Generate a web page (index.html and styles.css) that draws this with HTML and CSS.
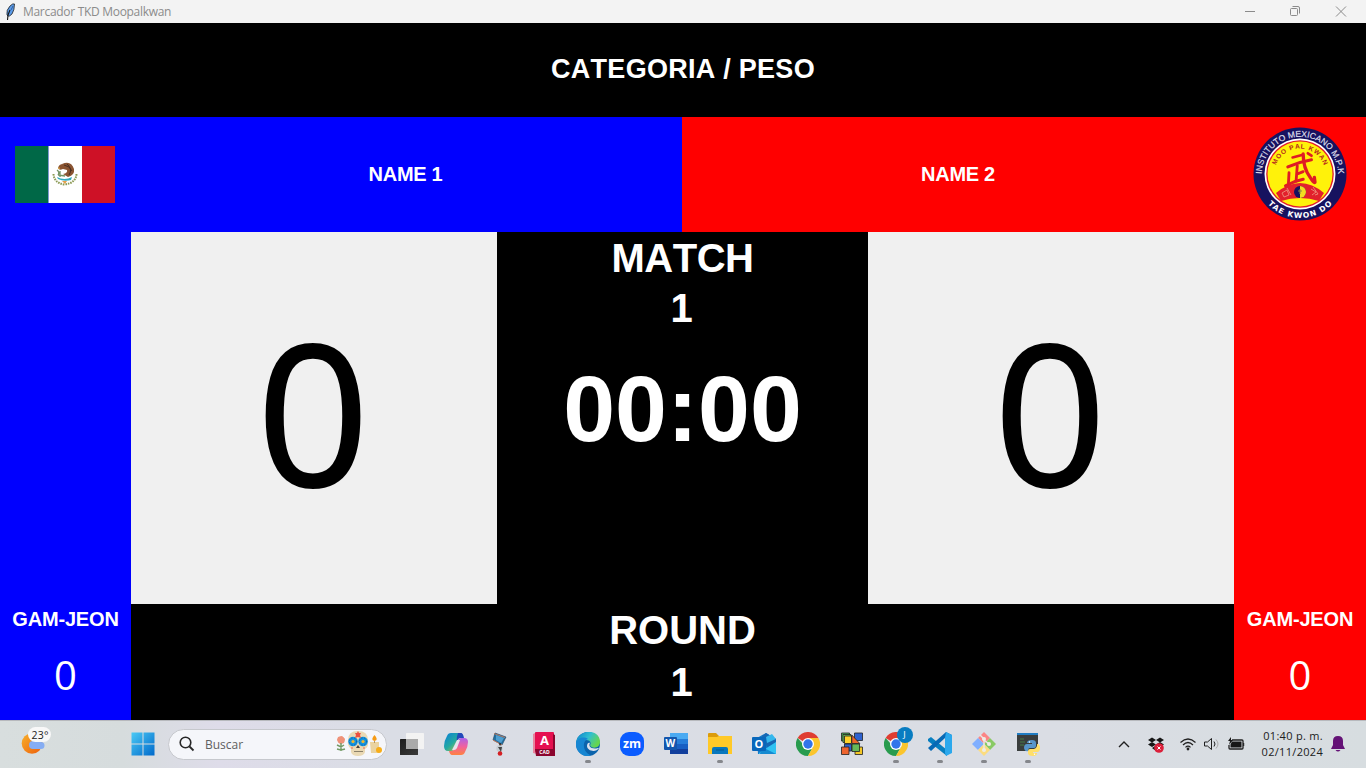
FILE: index.html
```html
<!DOCTYPE html>
<html lang="es">
<head>
<meta charset="utf-8">
<title>Marcador TKD Moopalkwan</title>
<link rel="stylesheet" href="styles.css">
</head>
<body>
<div class="screen">
  <header class="titlebar">
    <svg class="feather" viewBox="0 0 12 18"><path d="M3 12Q2 7 6 3Q9 0 10.500 1Q10.500 7 8 11Q5 14 4 13Z" fill="#5b9be8" stroke="#222" stroke-width=".8"/><path d="M6 7L4 12L3.500 17" fill="none" stroke="#151515" stroke-width="1.1"/><path d="M9 3L7 7" stroke="#244e8c" stroke-width=".8"/></svg>
    <span class="window-title">Marcador TKD Moopalkwan</span>
    <svg class="window-controls" viewBox="0 0 106 22" fill="none" stroke="#8b8b8b"><path d="M5 10.500H15"/><rect x="50.500" y="7.500" width="7" height="7" rx="1"/><path d="M52.500 5.500H58a1.500 1.500 0 0 1 1.500 1.500V12.500"/><path d="M96 5.500L106 15.500M106 5.500L96 15.500"/></svg>
  </header>
  <div class="category">CATEGORIA / PESO</div>
  <div class="names">
    <div class="fighter blue">
      <svg class="flag" viewBox="0 0 100 57"><path fill="#006847" d="M0 0h33.500v57H0z"/><path fill="#fff" d="M33.500 0h33.500v57H33.500z"/><path fill="#ce1126" d="M67 0h33v57H67z"/>
        <path d="M38.500 28Q39 37 49.500 38.500Q61 37 61.500 28" fill="none" stroke="#8c9a55" stroke-width="2" stroke-dasharray="1.600 .9"/><path d="M42 31Q49.500 35 57 31L56 34Q49 36 43 33Z" fill="#2fa9bd"/><path d="M47 35h5l-2 3z" fill="#e5a04b"/><path d="M47 18Q56 14 59 23Q60 29 53 31L48 28Q53 27 52 24L48 23Q44 25 43 22Q44 18 48 18Z" fill="#8a5432"/><path d="M52 18Q58 23 54 29M49 19Q55 20 57 25" fill="none" stroke="#4b2f22"/><path d="M42 24Q45 26 43 29M45 25v6M43 29l7 1" stroke="#749365" fill="none" stroke-width="1.300"/><path d="M44 21l-1 2 2-.5z" fill="#e9b43e"/></svg>
      <span class="fighter-name">NAME 1</span>
    </div>
    <div class="fighter red">
      <span class="fighter-name">NAME 2</span>
      <svg class="school" viewBox="0 0 94 94">
        <defs><path id="outer" d="M8.800 48A38.200 38.200 0 0 1 85.200 48"/><path id="inner" d="M21.500 47A25.500 25.500 0 0 1 72.500 47"/><path id="lower" d="M3 47A44 44 0 0 0 91 47"/></defs>
        <circle cx="47" cy="47" r="46.500" fill="#17125f"/><circle cx="47" cy="47" r="35.500" fill="#fff"/><circle cx="47" cy="47" r="33.800" fill="#e21a2c"/><circle cx="47" cy="47" r="32.500" fill="#fff20a"/>
        <path d="M23 66Q47 46 71 66L66 74Q47 68 28 74Z" fill="#e2202c"/><circle cx="47" cy="65" r="6" fill="#17125f"/><path d="M47 59a6 6 0 0 1 0 12z" fill="#f2dc20"/><path d="M45 64h4M47 62v5" stroke="#8f8a45"/><path d="M29 66l5-3 2 5-5 2zM34 61l4 7M58 62l5 3-4 3M60 60l5 7-3 1" stroke="#ef9a83" fill="none" stroke-width=".8"/>
        <g fill="none" stroke="#df1c24" stroke-linecap="round" stroke-linejoin="round" transform="translate(-10 -8.500) scale(1.180)"><path d="M42 33L50 31" stroke-width="2.200"/><path d="M38 41Q47 37 58 35" stroke-width="2.600"/><path d="M51 30Q51 42 57 50Q60 55 61 54L60.500 50" stroke-width="2.800"/><path d="M46 40L45 53M39 46L38.500 55M46 47L51 45" stroke-width="2.400"/><path d="M36 57Q43 53 51 51.500" stroke-width="2.600"/><path d="M55 29.500L58 31.500" stroke-width="2.400"/></g>
        <g class="school-text"><text class="outer-text"><textPath href="#outer" textLength="118" startOffset="1">INSTITUTO MEXICANO M.P.K</textPath></text><text class="inner-text"><textPath href="#inner" startOffset="50%" text-anchor="middle" textLength="62">MOO PAL KWAN</textPath></text><text class="lower-text"><textPath href="#lower" startOffset="50%" text-anchor="middle" textLength="72">TAE KWON DO</textPath></text></g>
      </svg>
    </div>
  </div>
  <main class="board">
    <aside class="penalty blue"><span class="penalty-label">GAM-JEON</span><span class="penalty-value">0</span></aside>
    <section class="center">
      <div class="scores">
        <div class="score">0</div>
        <div class="match"><span class="big-label match-label">MATCH</span><span class="match-number">1</span><span class="timer">00:00</span></div>
        <div class="score">0</div>
      </div>
      <div class="round"><span class="big-label">ROUND</span><span class="round-number">1</span></div>
    </section>
    <aside class="penalty red"><span class="penalty-label">GAM-JEON</span><span class="penalty-value">0</span></aside>
  </main>
  <footer class="taskbar">
    <svg class="weather" viewBox="0 0 32 32"><defs><linearGradient id="sun" y2="1"><stop stop-color="#f6b12c"/><stop offset="1" stop-color="#ee5e0b"/></linearGradient></defs><circle cx="11" cy="16.500" r="10.300" fill="url(#sun)"/><path d="M12 22a4 4 0 0 1 0-8 5 5 0 0 1 8 1 3.500 3.500 0 0 1 0 7z" fill="#86adf3"/><rect x="7" y="0" width="23" height="15" rx="7.500" fill="#f8f8f8"/><text x="10.500" y="11.500" class="temperature" textLength="17">23°</text></svg>
    <svg class="start" viewBox="0 0 24 24"><defs><linearGradient id="win" x2="1" y2="1"><stop stop-color="#4bcaf5"/><stop offset="1" stop-color="#0069cb"/></linearGradient></defs><path fill="url(#win)" d="M.5.5h11v11H.5zm12 0h11v11h-11zM.5 12.500h11v11H.5zm12 0h11v11h-11z"/></svg>
    <div class="search"><svg class="lens" viewBox="0 0 16 16"><circle cx="6.500" cy="6.500" r="5.300" fill="none" stroke="#272727" stroke-width="1.600"/><path d="M10.500 10.500L14.500 14.500" stroke="#272727" stroke-width="1.800"/></svg><span>Buscar</span>
      <svg class="holiday" viewBox="0 0 46 26"><g fill="#ef9279"><circle cx="5" cy="9" r="3.500"/><path d="M1 9l1-3 4-1 3 3-1 4-4 1z"/></g><path d="M5 12v8M1 14l4 2 3-2M1 18l4 1 4-1" stroke="#739a66" fill="none" stroke-width="1.500"/><path d="M12 9Q12 0 22 0T32 9Q33 16 29 18V21Q28 25 22 25T15 21V18Q11 15 12 9" fill="#ead9b4"/><g fill="#1593df"><circle cx="17" cy="10.500" r="4.800"/><circle cx="27" cy="10.500" r="4.800"/></g><g fill="none" stroke="#075797" stroke-dasharray="1 2"><circle cx="17" cy="10.500" r="3.600"/><circle cx="27" cy="10.500" r="3.600"/></g><g fill="#efb72d"><circle cx="17" cy="10.500" r="1.600"/><circle cx="27" cy="10.500" r="1.600"/></g><path d="M22 0l1 2 2 0-1 2 1 3-3-1-3 1 1-3-1-2 2 0z" fill="#ed5140"/><path d="M22 14l2 3h-4z" fill="#4a4137"/><path d="M18 20.500h9" stroke="#8b816a"/><circle cx="16" cy="17" r=".8" fill="#e5594c"/><circle cx="28" cy="17" r=".8" fill="#e5594c"/><path d="M34 11h9v11h-8z" fill="#ead3a0"/><path d="M38.500 4Q43 9 38.500 10 34 9 38.500 4" fill="#f69b15"/><path d="M38.500 10v2" stroke="#a98145" stroke-width=".8"/><circle cx="43" cy="19" r="3" fill="#f8ad17"/></svg>
    </div>
    <nav class="apps">
      <div class="app"><svg viewBox="0 0 24 24"><defs><linearGradient id="desk" y2="1"><stop stop-color="#1d1d1d"/><stop offset="1" stop-color="#3a3a3a"/></linearGradient></defs><rect y="7" width="18" height="16" rx=".6" fill="url(#desk)"/><rect x="6" y="1" width="18" height="16" rx=".6" fill="#f3f3f3"/><path d="M6 7h12v10H6z" fill="#aaa"/></svg></div>
      <div class="app"><svg viewBox="0 0 24 24"><defs><linearGradient id="copa" y2="1"><stop stop-color="#087eda"/><stop offset=".5" stop-color="#24aaa0"/><stop offset="1" stop-color="#f0cb16"/></linearGradient><linearGradient id="copb" x1="1" y2="1"><stop stop-color="#ac62e9"/><stop offset=".5" stop-color="#f0619e"/><stop offset="1" stop-color="#ff823f"/></linearGradient></defs><path d="M7 1h9q3 0 3 5h-3q-2 0-3 3l-3 9q-1 1-3 1H4q-4 0-4-5 0-5 3-10 1-3 4-3" fill="url(#copa)"/><path d="M14 1h3q2 0 3 5h-4q-2 0-3 3-1-2 1-8" fill="#2249ba"/><path d="M17 6h3q4 0 4 4 0 5-3 10-1 3-4 3H8q-2 0-3-4h3q2 0 3-3l3-8q1-2 3-2" fill="url(#copb)"/><path d="M13 8h3l-3 8q-1 2-3 2H8z" fill="#e6e4ee"/></svg></div>
      <div class="app"><svg viewBox="0 0 24 24"><path d="M7 1l11 4-4 8L5 8z" fill="#2471a0" stroke="#183c5e" stroke-width=".6"/><path d="M8 3l8 3-3 5-5-3z" fill="#4e9fd2"/><path d="M6 1.500l11 4M5 8l9 5" stroke="#dc7c53" stroke-width=".8"/><path d="M12 11v11" stroke="#222" stroke-width="1.500"/><circle cx="11.500" cy="16.500" r="3.200" fill="#c5cdd3"/><path d="M10 15h4l-1 5z" fill="#444"/><circle cx="12" cy="21.500" r="2.300" fill="#d51f23"/></svg></div>
      <div class="app"><svg viewBox="0 0 24 24"><path d="M1 2L5 0v22l-4-1z" fill="#e7849d"/><rect x="3" width="19" height="20" rx="1" fill="#e51050"/><path d="M21 2l2 1v21H4l-1-7h18z" fill="#8b052e"/><text x="12.500" y="13" class="cad-a">A</text><text x="12.500" y="22" class="cad-word">CAD</text></svg></div>
      <div class="app active"><svg viewBox="0 0 24 24"><defs><linearGradient id="edge" x2="1" y2=".5"><stop stop-color="#087dcc"/><stop offset=".55" stop-color="#31bfd0"/><stop offset="1" stop-color="#66d64e"/></linearGradient></defs><circle cx="12" cy="12" r="12" fill="#0b63ac"/><path d="M0 11C1-3.500 24-4 24 10c0 7-9 7-10 3 2-3-1-5-4-5C5 8 1 11 0 11" fill="url(#edge)"/><path d="M0 11c1-5 8-7 12-4-5 1-7 12 3 16.600C7 26-1 19 0 11" fill="#1786d2"/><path d="M14 11c-1.500 2-.5 5.500 5 5.500 2 0 3-.7 4-.5-3 5-12 3-12-2 0-3 2-4 3-3" fill="#dce1eb"/></svg></div>
      <div class="app"><svg viewBox="0 0 24 24"><rect width="24" height="24" rx="9" fill="#0b5cff"/><text x="12" y="15.500" class="zoom" textLength="18" lengthAdjust="spacingAndGlyphs">zm</text></svg></div>
      <div class="app"><svg viewBox="0 0 24 24"><path d="M6 1h18v6H6z" fill="#4aaaf2"/><path d="M6 7h18v5H6z" fill="#267dd9"/><path d="M6 12h18v5H6z" fill="#185fc3"/><path d="M6 17h18v5H6z" fill="#123f9d"/><rect y="5" width="13" height="13" rx="1" fill="#1356ad"/><text x="6.300" y="15.300" class="word">W</text></svg></div>
      <div class="app active"><svg viewBox="0 0 24 24"><path d="M0 2q0-1 1-1h7l3 3h12l1 2v8H0z" fill="#dc9c0b"/><path d="M0 5h9l2-1h13v18H0z" fill="#ffc928"/><path d="M4 22v-5q0-2 2-2h12q2 0 2 2v5z" fill="#0877bd"/><path d="M8 18h8" stroke="#045a91"/></svg></div>
      <div class="app"><svg viewBox="0 0 24 24"><path d="M5 6l9-5 10 6v15H6z" fill="#1479c9"/><path d="M10 4l4-3 10 6v5l-9 3z" fill="#1767b3"/><path d="M14 5l6-3 4 5-9 4z" fill="#35b7ed"/><path d="M7 21l17-11v12H7z" fill="#30c2f2"/><path d="M10 15l14 7H8z" fill="#168ad1"/><rect y="5" width="14" height="14" rx="1" fill="#0867bb"/><text x="7" y="16" class="outlook">O</text></svg></div>
      <div class="app"><svg viewBox="0 0 24 24"><g id="chrome"><path d="M12 12L1.600 6A12 12 0 0 1 22.400 6z" fill="#df3d31"/><path d="M12 12h-5L1.600 6A12 12 0 0 0 12 24l5-9z" fill="#289b4e"/><path d="M12 6h10.400A12 12 0 0 1 12 24l5-9z" fill="#fbc52d"/><circle cx="12" cy="12" r="6" fill="#fff"/><circle cx="12" cy="12" r="4.700" fill="#3174ea"/></g></svg></div>
      <div class="app"><svg viewBox="0 0 24 24" stroke="#222" stroke-width=".8"><path fill="#4aae57" d="M1.500 1h8v8h-8z"/><path fill="#75ca5f" d="M3 2.500h8v8H3z"/><path fill="#ffd22a" d="M4.500 4h7v7.500h-7z"/><path fill="#2f62cf" d="M14.500 1h8v7.500h-8z"/><path fill="#ed652a" d="M11.800 3l8 8.500h-8z"/><path fill="#315fca" d="M4.500 12h7v7h-7z"/><path fill="#ee642f" d="M1.500 15h7.500v7.500H1.500z"/><path fill="#f4c725" d="M15 15h7.500v7.500H15z"/><path fill="#66b85a" d="M12 12h7.500v7.500H12z"/></svg></div>
      <div class="app active"><svg viewBox="0 0 24 24"><use href="#chrome"/></svg><span class="profile">J</span></div>
      <div class="app active"><svg viewBox="0 0 24 24"><path d="M0 7l3-2 16 13v6L0 9z" fill="#087fc0"/><path d="M0 16l18-16 6 3-7 3L3 19z" fill="#0869b5"/><path d="M18 0l6 3v18l-6 3-1-3V6z" fill="#2ba8ed"/></svg></div>
      <div class="app active"><svg viewBox="0 0 24 24"><path d="M12 0l6 6-6 6-6-6z" fill="#fb8585"/><path d="M6 6l6 6-6 6-6-6z" fill="#80afff"/><path d="M18 6l6 6-6 6-6-6z" fill="#89ca65"/><path d="M12 12l6 6-6 6-6-6z" fill="#fbdc80"/><path d="M8 3l4 4v11M12 8l5 4" stroke="#e9e8e5" stroke-width="1.500" fill="none"/><g fill="#eeece7"><circle cx="12" cy="7" r="2"/><circle cx="17" cy="12" r="2"/><circle cx="12" cy="18" r="2"/></g></svg></div>
      <div class="app active"><svg viewBox="0 0 24 24"><path d="M1 1h21v18H1z" fill="#393d3d"/><path d="M1 1h21v2H1z" fill="#207cc2"/><path d="M4 7h4M4 10h5M4 13h4" stroke="#477d49"/><path d="M11 11q0-3 5-3 4 0 4 3v3q0 2-2 2h-4q-2 0-2 3-3 1-4-3 0-4 3-4h5v-1z" fill="#5795ca"/><path d="M21 12q3 0 3 4t-3 4h-4v1h4q0 3-4 3-5 0-5-3v-2q0-2 2-2h4q2 0 3-3z" fill="#ffdf6a"/><circle cx="13.500" cy="10" r=".7" fill="#fff"/><circle cx="18.500" cy="22.200" r=".7" fill="#fff"/></svg></div>
    </nav>
    <svg class="tray" viewBox="0 0 130 24" fill="none" stroke="#202020"><path d="M5 15l5-5 5 5" stroke-width="1.400"/><g fill="#171717" stroke="none"><path d="M34 8l4-2.500 4 2.500-4 2.500zM42 8l4-2.500 4 2.500-4 2.500zM34 12.500l4-2.500 4 2.500-4 2.500zM42 12.500l4-2.500 4 2.500-4 2.500zM38 16l4-2.500 4 2.500-4 3z"/></g><circle cx="45" cy="16" r="4.800" fill="#dc203b" stroke="none"/><path d="M43.500 14.500l3 3m0-3l-3 3" stroke="#fff"/><g stroke-width="1.200"><path d="M66.500 10.500q7.500-7 15 0M69 13q5-5 10 0M71.500 15.300q2.500-2.500 5 0"/><circle cx="74" cy="17" r=".8" fill="#202020"/></g><path d="M90.500 10h3l4-3.500v11l-4-3.500h-3z"/><path d="M100 9.500q2 2.500 0 5"/><path d="M102 7.500q4 4.500 0 9" stroke="#aaa"/><path d="M118 8h10q1 0 1 1v7q0 1-1 1h-12q-1 0-1-1v-3" stroke-width="1.300"/><path d="M118 9.500h9.500v6h-11v-3zM117 5l-3 4h2l-1 4 4-5h-2zM129.200 11h1v3h-1z" fill="#171717" stroke="none"/></svg>
    <div class="clock"><span>01:40 p. m.</span><span>02/11/2024</span></div>
    <svg class="bell" viewBox="0 0 14 16"><path d="M7 0q5 0 5 5v4l2 4H0l2-4V5q0-5 5-5M4.500 14h5q-2.500 3-5 0" fill="#641276"/></svg>
  </footer>
</div>
</body>
</html>
```

FILE: styles.css
```css
* { box-sizing: border-box; }
body { margin: 0; overflow: hidden; background: #000; }
.screen { width: 1366px; height: 768px; display: grid; grid-template-rows: 23px 94px 115px 488px 48px; color: #fff; font-family: "Liberation Sans", Arial, sans-serif; font-kerning: none; }
.titlebar { display: flex; align-items: center; background: #f3f3f3; color: #8b8b8b; font: 12px "Open Sans", sans-serif; }
.feather { width: 12px; height: 18px; margin-left: 4px; }
.window-title { margin-left: 7px; letter-spacing: -.3px; }
.window-controls { width: 106px; height: 22px; margin-left: auto; margin-right: 20px; overflow: visible; }
.category { display: flex; align-items: center; justify-content: center; padding-bottom: 1px; font-size: 27px; font-weight: bold; letter-spacing: .27px; }
.names { display: grid; grid-template-columns: 682px 684px; }
.fighter { display: flex; align-items: center; padding: 0 15px; }
.fighter-name { flex: 1; text-align: center; font-size: 20px; font-weight: bold; letter-spacing: -.3px; }
.blue { background: #00f; }
.red { background: #f00; }
.flag { width: 100px; height: 57px; }
.blue .fighter-name { padding-left: 29px; }
.red .fighter-name { padding-right: 34px; }
.school { width: 94px; height: 94px; margin-right: 4px; margin-bottom: 2px; }
.school-text { font-family: "Liberation Sans", sans-serif; fill: #dedfeb; }
.outer-text { font-size: 8.5px; stroke: #dedfeb; stroke-width: .2px; }
.inner-text { font-size: 6.6px; fill: #b5291d; font-weight: bold; }
.lower-text { font: bold 7.6px "DejaVu Sans", sans-serif; fill: #fff; }
.board { display: grid; grid-template-columns: 131px 1103px 132px; }
.penalty { display: flex; flex-direction: column; align-items: center; padding-top: 376px; }
.penalty-label { font-size: 20px; line-height: 23px; font-weight: bold; letter-spacing: -.18px; }
.penalty-value { margin-top: 15px; font: 40px/58px "Open Sans", sans-serif; }
.center { display: grid; grid-template-rows: 372px 116px; background: #000; }
.scores { display: grid; grid-template-columns: 366px 371px 366px; }
.score { display: flex; align-items: center; justify-content: center; padding: 0 2px 17px 0; background: #f0f0f0; color: #000; font: 197px/1 "Open Sans", sans-serif; -webkit-text-stroke: 2px #000; }
.match, .round { display: flex; flex-direction: column; align-items: center; }
.match { padding-top: 3px; }
.big-label, .match-number, .round-number { font-size: 40px; line-height: 46px; font-weight: bold; }
.match-label { letter-spacing: -.5px; }
.match-number { margin-top: 4px; }
.match-number, .round-number { padding-right: 2px; }
.timer { margin-top: 25px; font-size: 93.3px; line-height: 107px; font-weight: bold; }
.round { padding-top: 3px; }
.round-number { margin-top: 6px; }
.taskbar { display: flex; align-items: center; padding-bottom: 1px; border-top: 1px solid #b7b9bd; background: linear-gradient(90deg, #d8dede, #d6dcdd 9%, #dedce9 16%, #dadde5 28%, #dadde4 77%, #d7dde0); color: #202020; }
.weather { width: 32px; height: 32px; margin-left: 21px; margin-bottom: 2px; }
.temperature { font: 10.5px "Open Sans", sans-serif; fill: #222; }
.start { width: 24px; height: 24px; margin-left: 78px; }
.search { width: 219px; height: 31px; flex-shrink: 0; margin-left: 13px; display: flex; align-items: center; border: 1px solid #c6c8cd; border-radius: 16px; background: #f5f6fa; color: #606060; font: 12px "Open Sans", sans-serif; }
.lens { width: 16px; height: 16px; margin: 0 10px 0 10px; }
.holiday { width: 46px; height: 26px; margin-left: auto; margin-right: 4px; }
.apps { display: flex; margin-left: 2.5px; }
.app { width: 44px; height: 46px; display: flex; align-items: center; justify-content: center; position: relative; }
.app svg { width: 24px; height: 24px; }
.app.active::after { content: ""; position: absolute; bottom: 4px; width: 6px; height: 3px; border-radius: 2px; background: #85878c; }
.profile { position: absolute; top: 6px; right: 5px; width: 16px; height: 16px; border-radius: 50%; background: #087cc1; color: #fff; font: 9px/16px "Open Sans", sans-serif; text-align: center; }
.cad-a { font: bold 13px "Open Sans", sans-serif; text-anchor: middle; fill: #fff; }
.cad-word { font: bold 5px "Open Sans", sans-serif; text-anchor: middle; fill: #fff; }
.zoom { font: bold 12px "Open Sans", sans-serif; text-anchor: middle; fill: #fff; }
.word { font: bold 10px "Open Sans", sans-serif; text-anchor: middle; fill: #fff; }
.outlook { font: bold 11px "Open Sans", sans-serif; text-anchor: middle; fill: #fff; }
.tray { width: 130px; height: 24px; margin-left: 64px; overflow: visible; }
.clock { width: 66px; margin-left: auto; display: flex; flex-direction: column; align-items: flex-end; font: 11px/16px "Open Sans", sans-serif; letter-spacing: .3px; white-space: nowrap; }
.bell { width: 14px; height: 16px; margin-left: 8px; margin-right: 21px; }
```
